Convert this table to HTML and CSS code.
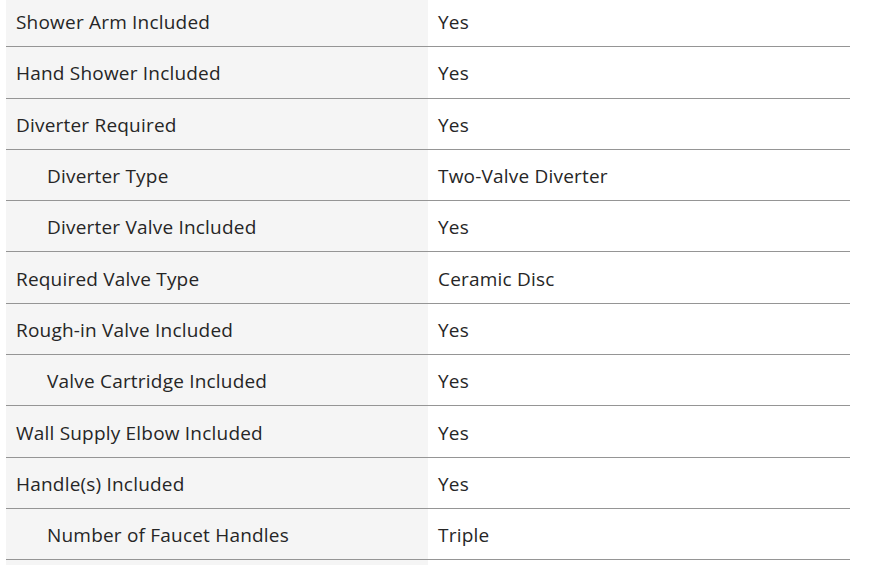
FILE: index.html
```html
<!DOCTYPE html>
<html lang="en">
<head>
<meta charset="utf-8">
<title>Specifications</title>
<link rel="stylesheet" href="styles.css">
</head>
<body>
<table class="specs">
  <tbody>
    <tr><th>Shower Arm Included</th><td>Yes</td></tr>
    <tr><th>Hand Shower Included</th><td>Yes</td></tr>
    <tr><th>Diverter Required</th><td>Yes</td></tr>
    <tr><th class="sub">Diverter Type</th><td>Two-Valve Diverter</td></tr>
    <tr><th class="sub">Diverter Valve Included</th><td>Yes</td></tr>
    <tr><th>Required Valve Type</th><td>Ceramic Disc</td></tr>
    <tr><th>Rough-in Valve Included</th><td>Yes</td></tr>
    <tr><th class="sub">Valve Cartridge Included</th><td>Yes</td></tr>
    <tr><th>Wall Supply Elbow Included</th><td>Yes</td></tr>
    <tr><th>Handle(s) Included</th><td>Yes</td></tr>
    <tr><th class="sub">Number of Faucet Handles</th><td>Triple</td></tr>
    <tr class="blank"><th></th><td></td></tr>
  </tbody>
</table>
</body>
</html>
```
FILE: styles.css
```css
html, body {
  margin: 0;
  padding: 0;
  background: #ffffff;
  overflow: hidden;
}
body {
  padding-left: 6px;
  font-family: "Open Sans", "Liberation Sans", sans-serif;
  color: #262626;
}
.specs {
  width: 844px;
  border-collapse: collapse;
  margin-top: -4px;
  font-size: 19px;
  letter-spacing: 0.2px;
}
.specs th,
.specs td {
  height: 48.3px;
  padding: 2px 10px 0;
  text-align: left;
  font-weight: 400;
  vertical-align: middle;
  border-bottom: 1px solid #959595;
  box-sizing: content-box;
  line-height: 24px;
}
.specs th {
  width: 402px;
  background: #f5f5f5;
}
.specs th.sub {
  padding-left: 41px;
  width: 371px;
}
.specs .blank th,
.specs .blank td {
  border-bottom: 0;
}
```
